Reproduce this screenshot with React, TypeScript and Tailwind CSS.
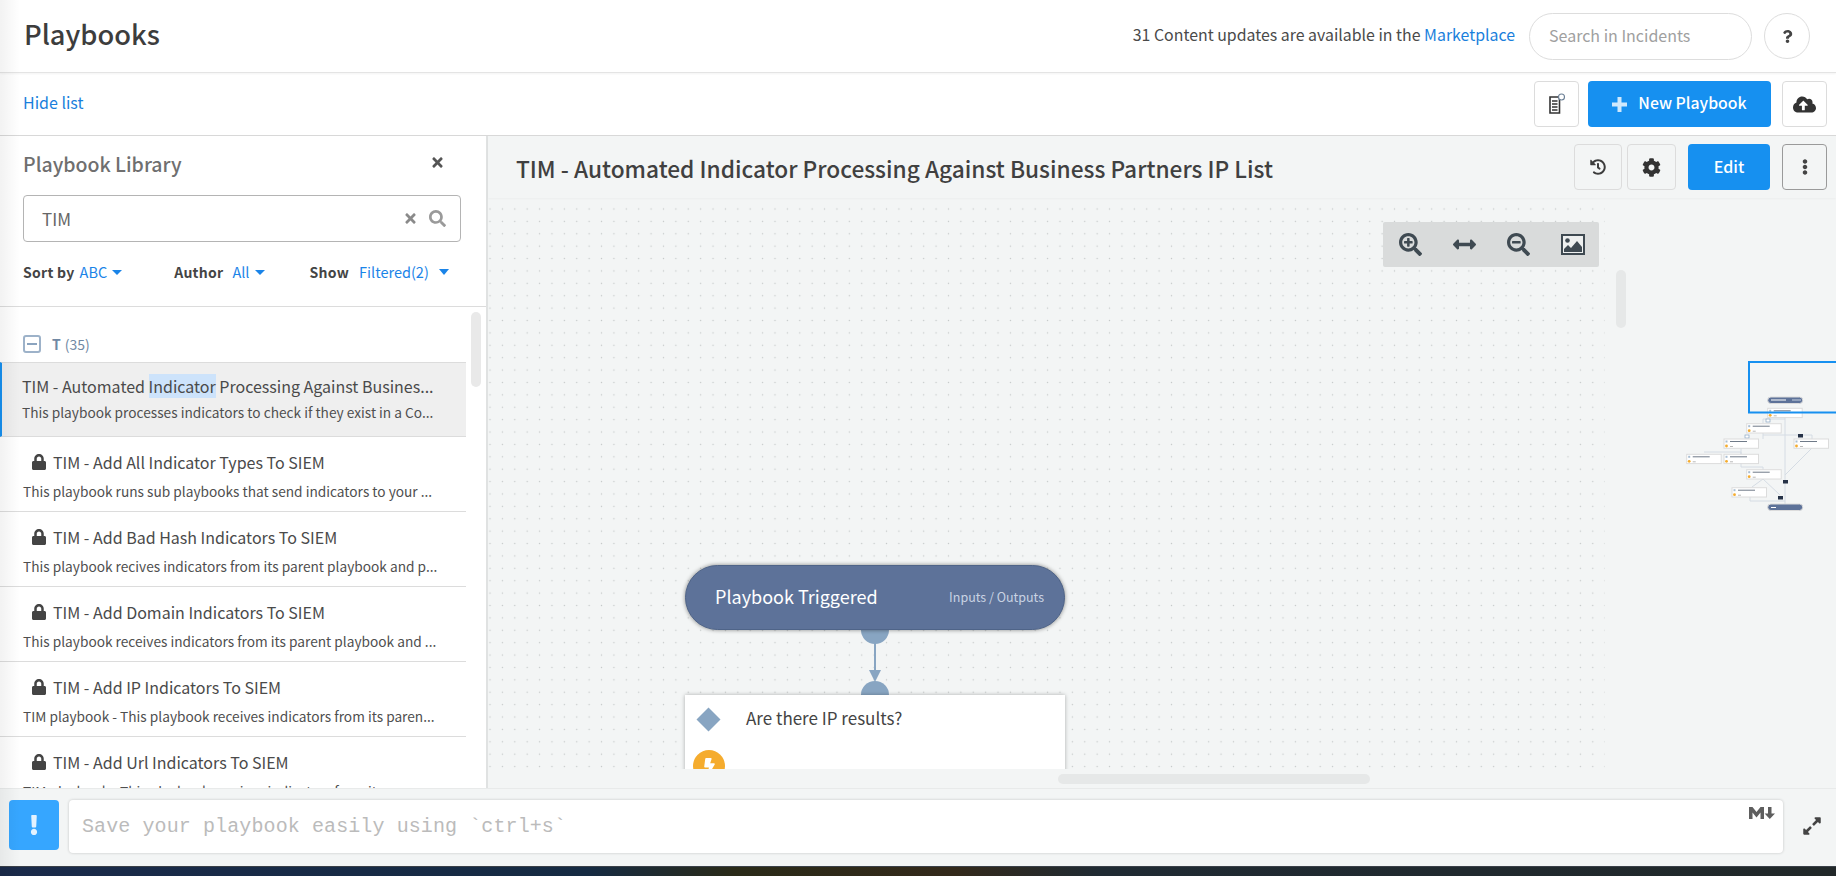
import { ReactNode } from "react";
import {
  FaBolt,
  FaCloudUploadAlt,
  FaCog,
  FaEllipsisV,
  FaExclamation,
  FaExpandAlt,
  FaHistory,
  FaLock,
  FaQuestion,
  FaSearch,
  FaSearchMinus,
  FaSearchPlus,
  FaTimes,
  FaArrowsAltH,
} from "react-icons/fa";

const playbooks = [
  {
    name: "TIM - Add All Indicator Types To SIEM",
    desc: "This playbook runs sub playbooks that send indicators to your ...",
  },
  {
    name: "TIM - Add Bad Hash Indicators To SIEM",
    desc: "This playbook recives indicators from its parent playbook and p...",
  },
  {
    name: "TIM - Add Domain Indicators To SIEM",
    desc: "This playbook receives indicators from its parent playbook and ...",
  },
  {
    name: "TIM - Add IP Indicators To SIEM",
    desc: "TIM playbook - This playbook receives indicators from its paren...",
  },
  {
    name: "TIM - Add Url Indicators To SIEM",
    desc: "TIM playbook - This playbook receives indicators from its paren...",
  },
];

const miniNodes = [
  [107.7, 68.3],
  [86.7, 83.7],
  [64, 99],
  [134, 99],
  [26.7, 114.3],
  [64, 114.3],
  [86.7, 129.7],
  [72, 147.7],
];

function ToolButton({ children, className }: { children: ReactNode; className: string }) {
  return (
    <button className={`flex h-[46px] items-center justify-center rounded border border-[#dcdcdc] text-[#3c3c3c] ${className}`}>
      {children}
    </button>
  );
}

function Caret() {
  return <span className="ml-[5px] inline-block h-0 w-0 border-x-[5px] border-t-[5px] border-x-transparent border-t-[#1a84e8] align-middle" />;
}

function Minimap() {
  return (
    <svg className="absolute left-[1172px] top-[142px]" width="176" height="190" viewBox="0 0 176 190">
      <g fill="none" stroke="#d5dce4" strokeWidth="1">
        <path d="M125 77V168M125 79H103V83M103 93V99M81 108V114M44 112H81V114M81 123V127H103V130M103 139L92 147M103 139L120 155M152 108L125 135M90 157V161H125M103 95H152V99" />
      </g>
      <rect x="106" y="79" width="4" height="3" fill="#fff" stroke="#8aa6c3" strokeWidth="0.7" />
      <rect x="85" y="95" width="4" height="3" fill="#fff" stroke="#8aa6c3" strokeWidth="0.7" />
      <rect x="138" y="94" width="5" height="3.5" fill="#263247" />
      <rect x="123" y="140" width="5" height="3.5" fill="#263247" />
      <rect x="118" y="156" width="5" height="3.5" fill="#263247" />
      {miniNodes.map(([x, y], i) => (
        <g key={i}>
          <rect x={x} y={y} width="34.5" height="9.3" fill="#fff" stroke="#dcdcdc" strokeWidth="1" />
          <rect x={x + 6} y={y + 2} width="17" height="1" fill="#6f7a88" />
          <circle cx={x + 2.5} cy={y + 7} r="1.4" fill="#f5ac2e" />
          <rect x={x + 1.5} y={y + 1.5} width="2" height="2" fill="#a7bdd3" />
          <rect x={x + 6} y={y + 7} width="3" height="1" fill="#b8b8b8" />
        </g>
      ))}
      <rect x="107.7" y="57" width="35" height="6.5" rx="3.2" fill="#5d7299" stroke="#dcdcdc" />
      <rect x="111" y="59.5" width="15" height="1" fill="#fff" />
      <rect x="132" y="59.5" width="9" height="1" fill="#c5cfe0" />
      <rect x="107.7" y="164" width="35" height="6.5" rx="3.2" fill="#5d7299" stroke="#dcdcdc" />
      <rect x="111" y="167" width="5" height="1" fill="#fff" />
      <path d="M176 22H89V72.5H176" fill="none" stroke="#1690f0" strokeWidth="2" />
    </svg>
  );
}

export default function App() {
  return (
    <div className="relative flex h-[876px] w-[1836px] flex-col overflow-hidden bg-white font-['Noto_Sans_CJK_SC','Source_Sans_Pro',sans-serif] text-[#3d3d3d]">
      <div className="pointer-events-none absolute inset-y-0 left-0 z-20 w-5 bg-gradient-to-r from-black/5 to-transparent" />

      <header className="flex h-[73px] shrink-0 items-center border-b border-[#e4e4e4] pl-[24px] pr-[26px] shadow-[0_1px_2px_rgba(0,0,0,0.05)]">
        <h1 className="-mt-[4px] text-[27.3px] font-medium leading-none text-[#3d3d3d]">Playbooks</h1>
        <div className="-mt-[3px] ml-auto text-[15.9px] leading-none text-[#4a4a4a]">
          31 Content updates are available in the <span className="text-[#1a7fdc]">Marketplace</span>
        </div>
        <div className="ml-[14px] flex h-[47px] w-[223px] items-center rounded-full border border-[#dddddd] pb-[3px] pl-[19px] text-[16px] leading-none text-[#a0a0a0]">
          Search in Incidents
        </div>
        <button className="ml-3 flex h-[46px] w-[46px] items-center justify-center rounded-full border border-[#dddddd]">
          <FaQuestion className="h-[13px] w-[13px] text-[#444]" />
        </button>
      </header>

      <div className="flex h-[63px] shrink-0 items-center border-b border-[#d8d8d8] pl-[23px] pr-[9px]">
        <span className="-mt-[5px] text-[16px] leading-none text-[#1a7fdc]">Hide list</span>
        <ToolButton className="ml-auto w-[45px]">
          <svg width="18" height="22" viewBox="0 0 18 22" fill="none">
            <path d="M2 4h9.5v16H2z" fill="#fff" stroke="#333" strokeWidth="1.6" />
            <path d="M4 8h5.5M4 11h5.5M4 14h5.5M4 17h5.5" stroke="#333" strokeWidth="1.5" />
            <circle cx="13.5" cy="4" r="3" fill="#fff" stroke="#6b7f95" strokeWidth="1.1" />
          </svg>
        </ToolButton>
        <button className="ml-[9px] flex h-[46px] w-[183px] items-center justify-center rounded bg-[#1690f0] text-[15.8px] font-medium leading-none text-white">
          <svg className="mr-[11px]" width="15" height="15" viewBox="0 0 15 15" fill="#cfe8fc">
            <path d="M5.5 0h4v5.5H15v4H9.5V15h-4V9.5H0v-4h5.5z" />
          </svg>
          <span className="-mt-[2px]">New Playbook</span>
        </button>
        <ToolButton className="ml-[11px] w-[45px]">
          <FaCloudUploadAlt className="h-[23px] w-[23px] text-[#333]" />
        </ToolButton>
      </div>

      <div className="flex min-h-0 flex-1">
        <aside className="flex w-[488px] shrink-0 flex-col border-r-2 border-[#e0e2e2]">
          <div className="flex h-[171px] shrink-0 flex-col border-b border-[#dcdcdc] pl-[23px] pr-[25px]">
            <div className="flex h-[59px] items-center justify-between pr-[16px]">
              <span className="-mt-[4px] text-[19.5px] font-medium leading-none text-[#6f6f6f]">Playbook Library</span>
              <FaTimes className="-mt-[6px] h-[15px] w-[15px] text-[#555]" />
            </div>
            <div className="flex h-[47px] items-center rounded border border-[#b4b4b4] pl-[18px] pr-[14px]">
              <span className="text-[17px] leading-none text-[#666]">TIM</span>
              <FaTimes className="ml-auto h-[15px] w-[15px] text-[#8a8a8a]" />
              <FaSearch className="ml-[11px] h-[17px] w-[17px] text-[#9a9a9a]" />
            </div>
            <div className="mt-[23px] flex items-center whitespace-nowrap text-[14px] leading-none">
              <span className="font-semibold tracking-[0.02em] text-[#444]">Sort by</span>
              <span className="ml-[5px] text-[14.5px] text-[#1a84e8]">ABC</span>
              <Caret />
              <span className="ml-[52px] font-semibold tracking-[0.02em] text-[#444]">Author</span>
              <span className="ml-[9px] text-[14.5px] text-[#1a84e8]">All</span>
              <Caret />
              <span className="ml-[45px] font-semibold tracking-[0.02em] text-[#444]">Show</span>
              <span className="ml-[10px] text-[14.5px] text-[#1a84e8]">Filtered(2)</span>
              <span className="ml-[10px] inline-block h-0 w-0 border-x-[5px] border-t-[6px] border-x-transparent border-t-[#1a84e8]" />
            </div>
          </div>

          <div className="relative min-h-0 flex-1 overflow-hidden">
            <div className="absolute right-[5px] top-[5px] h-[75px] w-[10px] rounded-full bg-[#e9e9e9]" />
            <div className="w-[466px]">
              <div className="flex h-[55px] items-center pl-[23px] pt-[18px]">
                <span className="flex h-[18px] w-[18px] items-center justify-center rounded-[3px] border-2 border-[#9db2c9]">
                  <span className="h-[2px] w-[10px] bg-[#8ba4bf]" />
                </span>
                <span className="ml-[11px] text-[14px] font-semibold leading-none text-[#7088a3]">T</span>
                <span className="ml-1 text-[14px] leading-none text-[#7088a3]">(35)</span>
              </div>
              <div className="h-[75px] border-y border-[#dcdcdc] border-l-2 border-l-[#1690f0] bg-[#efefef] pl-[20px] pt-[11px]">
                <div className="whitespace-nowrap text-[16px] leading-[24px] text-[#4a4a4a]">
                  TIM - Automated <span className="bg-[#cde3fb]">Indicator</span> Processing Against Busines...
                </div>
                <div className="mt-[4px] whitespace-nowrap text-[13.7px] leading-[20px] text-[#4f4f4f]">
                  This playbook processes indicators to check if they exist in a Co...
                </div>
              </div>
              {playbooks.map((p) => (
                <div key={p.name} className="h-[75px] border-b border-[#dcdcdc] pl-[23px] pt-[13px]">
                  <div className="flex items-center pl-[9px] text-[16px] leading-[24px] text-[#4a4a4a]">
                    <FaLock className="mr-[7px] h-[16px] w-[14px] text-[#444]" />
                    {p.name}
                  </div>
                  <div className="mt-[7px] whitespace-nowrap text-[13.7px] leading-[20px] text-[#4f4f4f]">{p.desc}</div>
                </div>
              ))}
            </div>
          </div>
        </aside>

        <main className="flex min-w-0 flex-1 flex-col bg-[#f3f5f5]">
          <div className="flex h-[62px] shrink-0 items-center pl-[28px] pr-[9px] shadow-[0_1px_2px_rgba(0,0,0,0.03)]">
            <h2 className="mt-[4px] text-[22.7px] font-medium leading-none text-[#404040]">
              TIM - Automated Indicator Processing Against Business Partners IP List
            </h2>
            <ToolButton className="ml-auto w-[48px]">
              <FaHistory className="h-[16px] w-[16px]" />
            </ToolButton>
            <ToolButton className="ml-[5px] w-[49px]">
              <FaCog className="h-[19px] w-[19px] text-[#333]" />
            </ToolButton>
            <button className="ml-3 flex h-[46px] w-[82px] items-center justify-center rounded bg-[#1690f0] pb-[2px] text-[16px] font-medium leading-none text-white">
              Edit
            </button>
            <button className="ml-3 flex h-[46px] w-[45px] items-center justify-center rounded border border-[#9a9a9a]">
              <FaEllipsisV className="h-[16px] w-[16px] text-[#444]" />
            </button>
          </div>

          <div className="relative min-h-0 flex-1 overflow-hidden">
            <div className="absolute inset-y-0 left-0 w-[1117px] bg-[radial-gradient(#c4c8c8_0.7px,transparent_1px)] bg-[length:12.4px_12.4px] bg-[position:-4.2px_4.8px]" />

            <div className="absolute left-[895px] top-[24px] flex h-[45px] w-[216px] items-center gap-[31px] rounded-[2px] bg-[#d9dbdb] pl-[16px] text-[#3f4a52]">
              <FaSearchPlus className="h-[23px] w-[23px]" />
              <FaArrowsAltH className="h-[23px] w-[23px]" />
              <FaSearchMinus className="h-[23px] w-[23px]" />
              <svg width="24" height="21" viewBox="0 0 24 21">
                <rect x="1" y="1" width="22" height="19" fill="#eef0f0" stroke="#3f4a52" strokeWidth="2" />
                <circle cx="6.5" cy="6.5" r="2.3" fill="#3f4a52" />
                <path d="M3 18v-3l4-4 3 3 6-7 5 6v5z" fill="#3f4a52" />
              </svg>
            </div>

            <div className="absolute left-[1128px] top-[72px] h-[58px] w-[10px] rounded-full bg-[#e6e8e8]" />
            <Minimap />

            <div className="absolute left-[373px] top-[418px] h-[28px] w-[28px] rounded-full bg-[#88a5c2]" />
            <div className="absolute left-[386px] top-[444px] h-[30px] w-[2px] bg-[#88a5c2]" />
            <div className="absolute left-[381px] top-[472px] h-0 w-0 border-x-[6px] border-t-[12px] border-x-transparent border-t-[#88a5c2]" />
            <div className="absolute left-[373px] top-[483px] h-[14px] w-[28px] rounded-t-full bg-[#88a5c2]" />

            <div className="absolute left-[197px] top-[367px] flex h-[65px] w-[380px] items-center justify-between rounded-[33px] border border-[#4f6488] bg-[#5d7299] pl-[29px] pr-[20px] shadow-[0_0_4px_rgba(0,0,0,0.45)]">
              <span className="-mt-[3px] text-[18px] leading-none text-white">Playbook Triggered</span>
              <span className="text-[12.5px] leading-none text-[#c9d3e3]">Inputs / Outputs</span>
            </div>

            <div className="absolute left-[197px] top-[497px] h-[110px] w-[380px] bg-white shadow-[0_0_4px_rgba(0,0,0,0.3)]">
              <span className="absolute left-[15px] top-[16px] h-[17px] w-[17px] rotate-45 bg-[#88a5c2]" />
              <span className="absolute left-[61px] top-[11px] text-[17px] leading-[24px] text-[#444]">Are there IP results?</span>
              <span className="absolute left-[8px] top-[55px] flex h-[32px] w-[32px] items-center justify-center rounded-full bg-[#f5ac2e]">
                <FaBolt className="h-[17px] w-[17px] text-white" />
              </span>
            </div>

            <div className="absolute inset-x-0 bottom-0 h-[19px] bg-[#f3f5f5]">
              <div className="absolute left-[570px] top-[5px] h-[10px] w-[312px] rounded-full bg-[#e6e8e8]" />
            </div>
          </div>
        </main>
      </div>

      <footer className="z-10 flex h-[78px] shrink-0 items-start border-t border-[#e8eaea] bg-[#f3f5f5] pl-[9px] pt-[11px]">
        <button className="flex h-[50px] w-[50px] items-center justify-center rounded bg-[#36a6ff]">
          <FaExclamation className="h-[20px] w-[20px] text-[#e3f2ff]" />
        </button>
        <div className="relative ml-[10px] flex h-[53px] w-[1714px] items-center rounded bg-white pl-[13px] font-['Liberation_Mono',monospace] text-[20px] leading-none tracking-[0.1px] text-[#bbbbbb] shadow-[0_0_3px_rgba(0,0,0,0.2)]">
          Save your playbook easily using `ctrl+s`
          <svg className="absolute right-[8px] top-[7px]" width="26" height="12" viewBox="0 0 26 12" fill="#5e5e5e">
            <path d="M0 12V0h3.5L7.5 5l4-5H15v12h-3.5V5.5l-4 5-4-5V12z" />
            <path d="M19 0h3.5v6.5H26L20.8 12 15.6 6.5H19z" />
          </svg>
        </div>
        <FaExpandAlt className="ml-[19px] mt-[16px] h-[20px] w-[20px] text-[#444]" />
      </footer>

      <div className="h-[10px] shrink-0 border-t border-[#3a4048] bg-[linear-gradient(90deg,#1a2a4a_0%,#152a42_32%,#2a2a18_40%,#33291a_52%,#1f2a33_60%,#212829_100%)]" />
    </div>
  );
}
